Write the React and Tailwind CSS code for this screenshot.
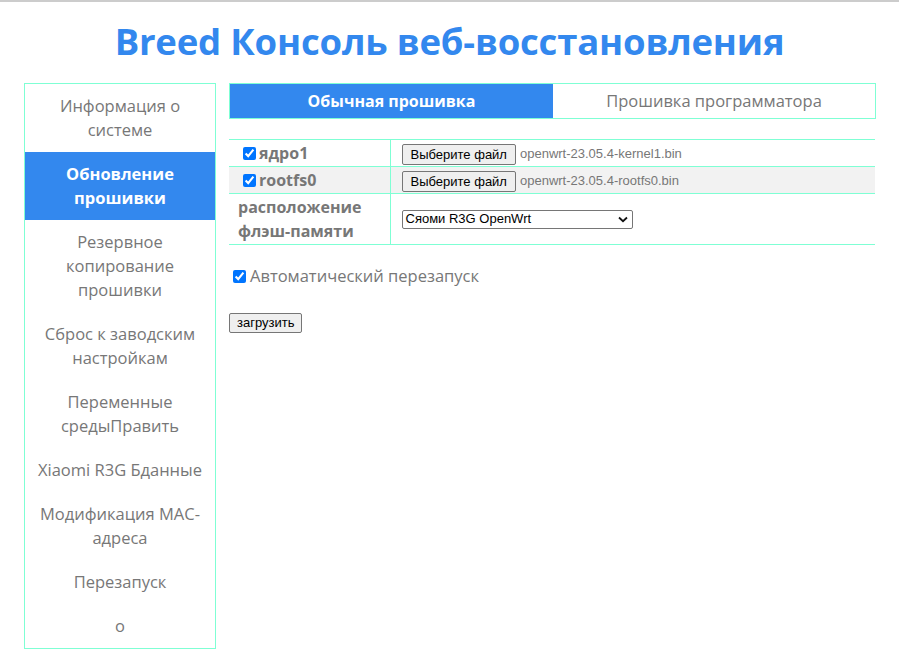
import { useState } from 'react';

const menu = [
    'Информация о системе',
    'Обновление прошивки',
    'Резервное копирование прошивки',
    'Сброс к заводским настройкам',
    'Переменные средыПравить',
    'Xiaomi R3G Бданные',
    'Модификация MAC-адреса',
    'Перезапуск',
    'о',
];

function Check() {
    return (
        <input type="checkbox" defaultChecked className="w-[13px] h-[13px] m-0 mr-[3px] accent-[#0075ff] align-[-1px]" />
    );
}

function FileButton({ name }) {
    return (
        <div className="flex items-center gap-[4px] pt-[2px]">
            <button className="h-[21px] px-[8px] border border-[#767676] rounded-[2px] bg-[#efefef] text-[13px] text-black font-['Liberation_Sans',sans-serif]">
                Выберите файл
            </button>
            <span className="text-[13px] text-[#777] font-['Liberation_Sans',sans-serif]">{name}</span>
        </div>
    );
}

export default function App() {
    const [active] = useState(1);

    return (
        <div className="w-[899px] min-h-[672px] bg-white border-t-2 border-[#cccccc] font-['Open_Sans',sans-serif]">
            <h1 className="text-center text-[36.5px] font-bold text-[#3388ee] leading-[44px] pt-[17px] pb-[20px] tracking-[-0.2px]">
                Breed Консоль веб-восстановления
            </h1>

            <div className="flex items-start pl-[24px] gap-[13px]">
                {/* sidebar */}
                <div className="w-[192px] border border-[#7fffd4]">
                    {menu.map((m, i) => (
                        <div
                            key={m}
                            className={`px-[8px] py-[10px] text-center text-[16.5px] leading-[24px] ${i === active ? 'bg-[#3388ee] text-white font-bold' : 'text-[#777]'}`}
                        >
                            {m}
                        </div>
                    ))}
                </div>

                {/* main */}
                <div className="w-[647px]">
                    <div className="flex border border-[#7fffd4] h-[36px]">
                        <div className="w-[323px] bg-[#3388ee] text-white font-bold text-[16px] flex items-center justify-center">
                            Обычная прошивка
                        </div>
                        <div className="flex-1 text-[#777] text-[16.5px] flex items-center justify-center">
                            Прошивка программатора
                        </div>
                    </div>

                    <table className="mt-[20px] w-[646px] border-collapse">
                        <tbody>
                            <tr className="border-y border-[#7fffd4] h-[27px]">
                                <td className="w-[161px] pl-[14px] text-[16px] font-bold text-[#777] border-r border-[#7fffd4]">
                                    <Check />ядро1
                                </td>
                                <td className="pl-[11px]">
                                    <FileButton name="openwrt-23.05.4-kernel1.bin" />
                                </td>
                            </tr>
                            <tr className="border-y border-[#7fffd4] h-[27px] bg-[#f2f2f2]">
                                <td className="pl-[14px] text-[16px] font-bold text-[#777] border-r border-[#7fffd4]">
                                    <Check />rootfs0
                                </td>
                                <td className="pl-[11px]">
                                    <FileButton name="openwrt-23.05.4-rootfs0.bin" />
                                </td>
                            </tr>
                            <tr className="border-y border-[#7fffd4] h-[51px]">
                                <td className="pl-[9px] text-[16px] leading-[24px] font-bold text-[#777] border-r border-[#7fffd4]">
                                    расположение флэш-памяти
                                </td>
                                <td className="pl-[11px]">
                                    <div className="w-[231px] h-[19px] border border-[#767676] rounded-[2px] flex items-center justify-between pl-[3px] pr-[4px] text-[13px] text-black font-['Liberation_Sans',sans-serif]">
                                        <span>Сяоми R3G OpenWrt</span>
                                        <svg width="10" height="7" viewBox="0 0 10 7">
                                            <path d="M1 1.5 L5 5.2 L9 1.5" fill="none" stroke="#111" strokeWidth="1.8" />
                                        </svg>
                                    </div>
                                </td>
                            </tr>
                        </tbody>
                    </table>

                    <div className="mt-[19px] flex items-center text-[16.5px] text-[#777] pl-[4px]">
                        <Check />
                        <span className="ml-[1px]">Автоматический перезапуск</span>
                    </div>

                    <button className="mt-[24px] h-[20px] px-[7px] border border-[#767676] rounded-[2px] bg-[#efefef] text-[13px] text-black font-['Liberation_Sans',sans-serif] leading-none">
                        загрузить
                    </button>
                </div>
            </div>
        </div>
    );
}
